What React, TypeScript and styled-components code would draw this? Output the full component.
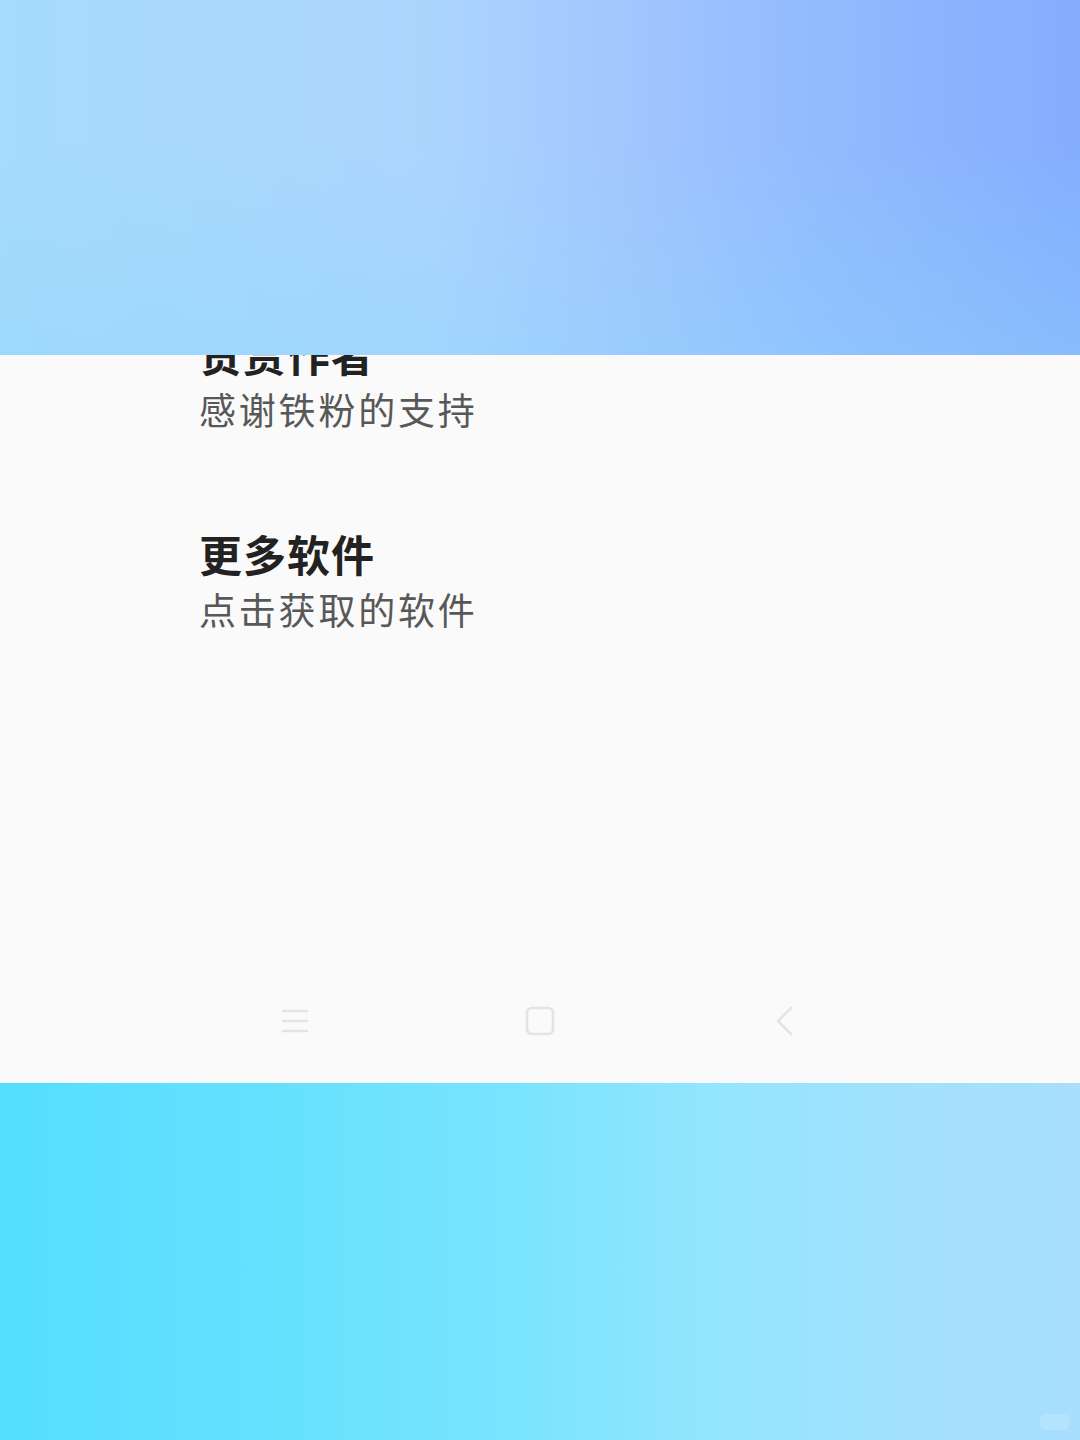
import React from "react";
import styled, { createGlobalStyle } from "styled-components";

const Global = createGlobalStyle`
  html, body { margin: 0; padding: 0; }
  body { font-family: "Noto Sans CJK SC", "Noto Sans", sans-serif; }
`;

const Page = styled.div`
  width: 1080px;
  height: 1440px;
  display: flex;
  flex-direction: column;
  overflow: hidden;
`;

const TopBand = styled.div`
  height: 355px;
  flex: none;
  background:
    linear-gradient(to top, rgba(140, 215, 252, 0.35), rgba(140, 215, 252, 0) 60%),
    linear-gradient(to right, #a6dbfd 0%, #acd5fe 40%, #a2c6fe 58%, #92bbfe 75%, #84adfe 100%);
`;

const BottomBand = styled.div`
  flex: 1;
  position: relative;
  background: linear-gradient(to right, #55defe 0%, #64e1fe 25%, #7ae4fe 48%, #92e5fe 65%, #a3e1fe 85%, #a8defe 100%);
`;

const Panel = styled.div`
  height: 728px;
  flex: none;
  background: #fafafa;
  display: flex;
  flex-direction: column;
  overflow: hidden;
`;

const List = styled.div`
  margin-top: -30px;
  padding-left: 199px;
  display: flex;
  flex-direction: column;
  gap: 88px;
`;

const Item = styled.div`
  display: flex;
  flex-direction: column;
`;

const Title = styled.div`
  font-size: 43px;
  line-height: 56px;
  font-weight: 700;
  color: #222222;
  letter-spacing: 1px;
`;

const Subtitle = styled.div`
  font-size: 37px;
  line-height: 56px;
  font-weight: 400;
  color: #585858;
  letter-spacing: 2.8px;
`;

const NavBar = styled.div`
  margin-top: auto;
  height: 124px;
  display: flex;
  align-items: center;
  justify-content: center;
  gap: 165px;
`;

const NavSlot = styled.div`
  width: 80px;
  height: 40px;
  display: flex;
  align-items: center;
  justify-content: center;
`;

const Watermark = styled.div`
  position: absolute;
  right: 10px;
  bottom: 10px;
  width: 30px;
  height: 16px;
  border-radius: 6px;
  background: rgba(255, 255, 255, 0.15);
`;

const items = [
  { title: "赞赏作者", sub: "感谢铁粉的支持" },
  { title: "更多软件", sub: "点击获取的软件" },
];

export default function App() {
  return (
    <Page>
      <Global />
      <TopBand />
      <Panel>
        <List>
          {items.map((it) => (
            <Item key={it.title}>
              <Title>{it.title}</Title>
              <Subtitle>{it.sub}</Subtitle>
            </Item>
          ))}
        </List>
        <NavBar>
          <NavSlot>
            <svg width="28" height="24" viewBox="0 0 28 24">
              <g stroke="#e4e4e4" strokeWidth="2.6" strokeLinecap="round">
                <line x1="2" y1="2" x2="26" y2="2" />
                <line x1="2" y1="12" x2="26" y2="12" />
                <line x1="2" y1="22" x2="26" y2="22" />
              </g>
            </svg>
          </NavSlot>
          <NavSlot>
            <svg width="30" height="30" viewBox="0 0 30 30">
              <rect x="2" y="2" width="26" height="26" rx="5" fill="none" stroke="#e4e4e4" strokeWidth="2.6" />
            </svg>
          </NavSlot>
          <NavSlot>
            <svg width="20" height="30" viewBox="0 0 20 30">
              <polyline points="16,2 3,15 16,28" fill="none" stroke="#e4e4e4" strokeWidth="2.6" strokeLinecap="round" strokeLinejoin="round" />
            </svg>
          </NavSlot>
        </NavBar>
      </Panel>
      <BottomBand>
        <Watermark />
      </BottomBand>
    </Page>
  );
}
